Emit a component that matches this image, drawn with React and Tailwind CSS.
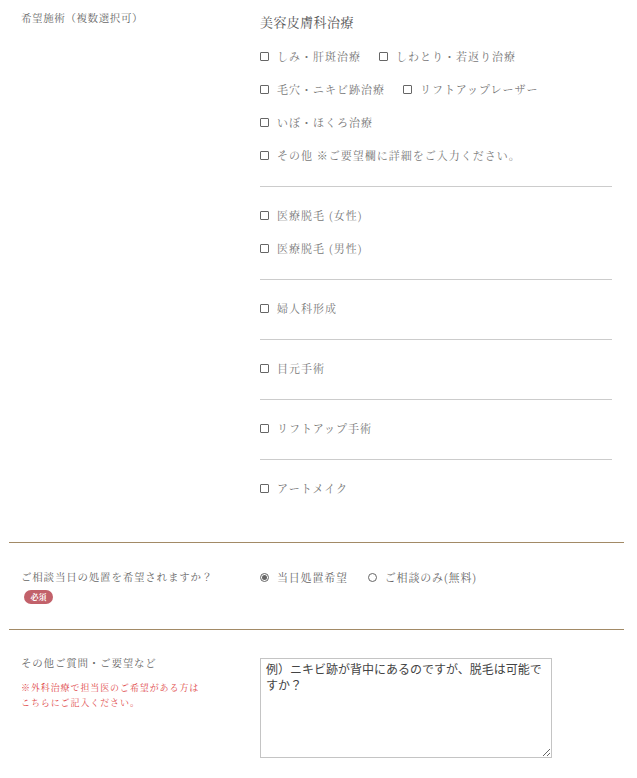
import { useState } from "react";

const FONT = { fontFamily: '"Noto Serif CJK JP", "Noto Sans CJK JP", serif' };

// treatment groups, one divider between each
const groups = [
  {
    title: "美容皮膚科治療",
    rows: [
      ["しみ・肝斑治療", "しわとり・若返り治療"],
      ["毛穴・ニキビ跡治療", "リフトアップレーザー"],
      ["いぼ・ほくろ治療"],
      ["その他 ※ご要望欄に詳細をご入力ください。"],
    ],
  },
  { rows: [["医療脱毛 (女性)"], ["医療脱毛 (男性)"]] },
  { rows: [["婦人科形成"]] },
  { rows: [["目元手術"]] },
  { rows: [["リフトアップ手術"]] },
  { rows: [["アートメイク"]] },
];

function Check({ label, checked, onToggle }) {
  return (
    <label className="flex items-center mr-[18px] cursor-pointer" onClick={onToggle}>
      <span
        className={`w-[9px] h-[9px] border border-[#666] rounded-[1px] shrink-0 ${checked ? "bg-[#777]" : "bg-white"}`}
      />
      <span className="ml-[8px] text-[11px] tracking-[1px] text-[#777] whitespace-nowrap">{label}</span>
    </label>
  );
}

function Radio({ label, checked, onSelect }) {
  return (
    <label className="flex items-center mr-[20px] cursor-pointer" onClick={onSelect}>
      <span className="w-[9px] h-[9px] rounded-full border border-[#666] flex items-center justify-center shrink-0">
        {checked && <span className="w-[5px] h-[5px] rounded-full bg-[#666]" />}
      </span>
      <span className="ml-[8px] text-[11px] tracking-[0.8px] text-[#666] whitespace-nowrap">{label}</span>
    </label>
  );
}

export default function App() {
  const [picked, setPicked] = useState({});
  const [sameDay, setSameDay] = useState(true);
  const [note, setNote] = useState("例）ニキビ跡が背中にあるのですが、脱毛は可能ですか？");

  const toggle = (k) => setPicked((p) => ({ ...p, [k]: !p[k] }));

  return (
    <div className="bg-white min-h-screen" style={FONT}>
      <div className="w-[615px] ml-[9px]">
        {/* 希望施術 */}
        <div className="flex pt-[10px] pb-[23px] border-b border-[#a28a66]">
          <div className="w-[251px] pl-[12px] text-[10.5px] leading-4 tracking-[0.6px] text-[#666]">
            希望施術（複数選択可）
          </div>
          <div className="w-[352px]">
            {groups.map((g, gi) => (
              <div
                key={gi}
                className={`${gi === 0 ? "" : "pt-[12px]"} pb-[14px] ${gi < groups.length - 1 ? "border-b border-[#cccccc]" : ""}`}
              >
                {g.title && (
                  <div className="text-[13px] leading-6 tracking-[0.4px] text-[#555] mb-[6px]">{g.title}</div>
                )}
                {g.rows.map((row, ri) => (
                  <div key={ri} className="flex items-center h-[33px]">
                    {row.map((item) => (
                      <Check key={item} label={item} checked={!!picked[item]} onToggle={() => toggle(item)} />
                    ))}
                  </div>
                ))}
              </div>
            ))}
          </div>
        </div>

        {/* 当日処置 */}
        <div className="flex pt-[26px] pb-[25px] border-b border-[#a28a66]">
          <div className="w-[251px] pl-[12px]">
            <div className="text-[10.5px] leading-4 tracking-[0.8px] text-[#666]">ご相談当日の処置を希望されますか？</div>
            <div className="mt-[5px] ml-[3px] w-[29px] h-[14px] rounded-full bg-[#c2616a] flex items-center justify-center text-[8px] font-bold text-white">
              必須
            </div>
          </div>
          <div className="flex items-center h-4 pt-[1px]">
            <Radio label="当日処置希望" checked={sameDay} onSelect={() => setSameDay(true)} />
            <Radio label="ご相談のみ(無料)" checked={!sameDay} onSelect={() => setSameDay(false)} />
          </div>
        </div>

        {/* その他 */}
        <div className="flex pt-[25px] pb-[19px]">
          <div className="w-[251px] pl-[12px]">
            <div className="text-[10.5px] leading-4 tracking-[0.8px] text-[#666]">その他ご質問・ご要望など</div>
            <div className="mt-[9px] text-[9px] leading-[15px] tracking-[0.9px] text-[#e04848]">
              ※外科治療で担当医のご希望がある方は
              <br />
              こちらにご記入ください。
            </div>
          </div>
          <textarea
            value={note}
            onChange={(e) => setNote(e.target.value)}
            className="mt-[3px] w-[292px] h-[100px] border border-[#c4c4c4] px-[5px] py-[2px] text-[12px] leading-4 text-[#444] outline-none resize"
            style={{ fontFamily: '"Noto Sans CJK JP", sans-serif' }}
          />
        </div>
      </div>
    </div>
  );
}
